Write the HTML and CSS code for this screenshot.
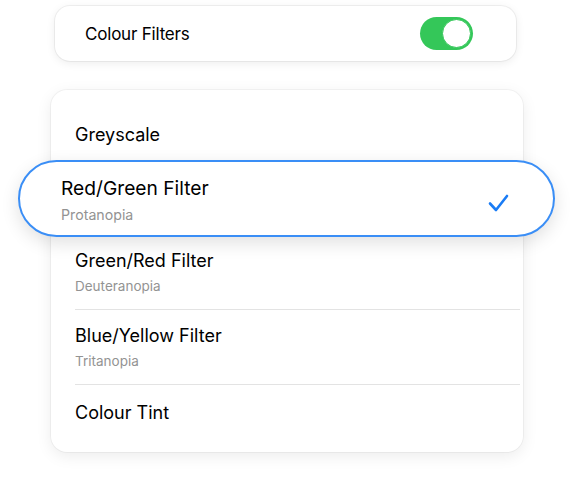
FILE: index.html
```html
<!DOCTYPE html>
<html>
<head>
<meta charset="utf-8">
<link rel="stylesheet" href="styles.css">
</head>
<body>
<div class="page">
  <div class="toggle-card">
    <span class="toggle-label">Colour Filters</span>
    <span class="switch"><span class="knob"></span></span>
  </div>

  <div class="list-wrap">
    <div class="list-card">
      <div class="row single"><span class="title">Greyscale</span></div>
      <div class="row slot"></div>
      <div class="row double"><span class="title">Green/Red Filter</span><span class="sub">Deuteranopia</span></div>
      <div class="row double"><span class="title">Blue/Yellow Filter</span><span class="sub">Tritanopia</span></div>
      <div class="row single last"><span class="title">Colour Tint</span></div>
    </div>

    <div class="selected">
      <div class="sel-text">
        <span class="title">Red/Green Filter</span>
        <span class="sub">Protanopia</span>
      </div>
      <svg class="check" width="22" height="20" viewBox="0 0 22 20">
        <path d="M3 10.5 L9 17 L20 3" fill="none" stroke="#1a7cf5" stroke-width="2.6" stroke-linecap="round" stroke-linejoin="round"/>
      </svg>
    </div>
  </div>
</div>
</body>
</html>
```

FILE: styles.css
```css
* { box-sizing: border-box; }
html, body {
  margin: 0;
  padding: 0;
  background: #ffffff;
}
body {
  font-family: Inter, "Noto Sans", "Liberation Sans", sans-serif;
  color: #000;
}
.page {
  width: 573px;
  height: 477px;
  padding-top: 6px;
  display: flex;
  flex-direction: column;
}
.toggle-card {
  margin-left: 55px;
  width: 461px;
  height: 55px;
  background: #fff;
  border-radius: 15px;
  box-shadow: 0 2px 10px rgba(0,0,0,0.08), 0 0 0 1px rgba(0,0,0,0.05);
  display: flex;
  align-items: center;
  justify-content: space-between;
  padding: 0 43px 0 30px;
}
.toggle-label {
  font-size: 17px;
  letter-spacing: -0.2px;
}
.switch {
  width: 53px;
  height: 33px;
  border-radius: 17px;
  background: #34c759;
  display: flex;
  justify-content: flex-end;
  align-items: center;
  padding: 2px;
}
.knob {
  width: 29px;
  height: 29px;
  border-radius: 50%;
  background: #fff;
  border: 1.5px solid #34c759;
}
.list-wrap {
  position: relative;
  margin-top: 29px;
  margin-left: 51px;
  width: 472px;
}
.list-card {
  background: #fff;
  border-radius: 16px;
  box-shadow: 0 4px 16px rgba(0,0,0,0.08), 0 0 0 1px rgba(0,0,0,0.04);
  padding: 17px 0 11px 0;
}
.row {
  margin-left: 24px;
  margin-right: 3px;
  display: flex;
  flex-direction: column;
  justify-content: flex-start;
  border-bottom: 1px solid #e3e3e3;
}
.row.last { border-bottom: none; }
.row.single {
  height: 56px;
  justify-content: center;
}
.row.double {
  height: 75px;
  padding-top: 14px;
}
.row.slot { height: 72px; }
.title {
  font-size: 18px;
  line-height: 24px;
}
.sub {
  font-size: 13.5px;
  line-height: 16px;
  color: #939393;
  margin-top: 5px;
}
.selected {
  position: absolute;
  left: -33px;
  top: 70px;
  width: 537px;
  height: 77px;
  background: #fff;
  border: 2px solid #3a8ef6;
  border-radius: 39px;
  box-shadow: 0 6px 18px rgba(0,0,0,0.12);
  display: flex;
  align-items: flex-start;
  justify-content: space-between;
  padding: 13px 44px 0 41px;
}
.sel-text {
  display: flex;
  flex-direction: column;
}
.sel-text .title {
  font-size: 19.2px;
  line-height: 26px;
}
.sel-text .sub {
  font-size: 14.2px;
  line-height: 18px;
  margin-top: 5px;
}
.check {
  align-self: center;
  margin-top: -5px;
}
```
